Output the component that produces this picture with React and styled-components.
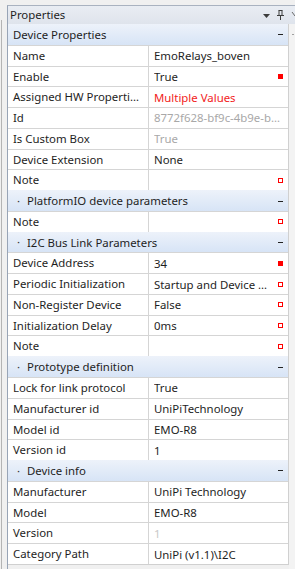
import styled, { createGlobalStyle } from "styled-components";

const GlobalStyle = createGlobalStyle`
  html, body {
    margin: 0;
    padding: 0;
    background: #f0f0f0;
    font-family: "Noto Sans", "Open Sans", sans-serif;
    font-size: 11.4px;
    color: #1e1e1e;
  }
`;

const sections = [
  {
    title: "Device Properties",
    bullet: false,
    rows: [
      { name: "Name", value: "EmoRelays_boven" },
      { name: "Enable", value: "True", mark: "filled" },
      { name: "Assigned HW Properties", value: "Multiple Values", tone: "red" },
      { name: "Id", value: "8772f628-bf9c-4b9e-b6a1-0c4e5d2f1a77", tone: "grey" },
      { name: "Is Custom Box", value: "True", tone: "grey" },
      { name: "Device Extension", value: "None" },
      { name: "Note", value: "", mark: "hollow" },
    ],
  },
  {
    title: "PlatformIO device parameters",
    bullet: true,
    rows: [{ name: "Note", value: "", mark: "hollow" }],
  },
  {
    title: "I2C Bus Link Parameters",
    bullet: true,
    rows: [
      { name: "Device Address", value: "34", mark: "filled" },
      { name: "Periodic Initialization", value: "Startup and Device Reset", mark: "hollow" },
      { name: "Non-Register Device", value: "False", mark: "hollow" },
      { name: "Initialization Delay", value: "0ms", mark: "hollow" },
      { name: "Note", value: "", mark: "hollow" },
    ],
  },
  {
    title: "Prototype definition",
    bullet: true,
    rows: [
      { name: "Lock for link protocol", value: "True" },
      { name: "Manufacturer id", value: "UniPiTechnology" },
      { name: "Model id", value: "EMO-R8" },
      { name: "Version id", value: "1" },
    ],
  },
  {
    title: "Device info",
    bullet: true,
    rows: [
      { name: "Manufacturer", value: "UniPi Technology" },
      { name: "Model", value: "EMO-R8" },
      { name: "Version", value: "1", tone: "light" },
      { name: "Category Path", value: "UniPi (v1.1)\\I2C" },
    ],
  },
];

const App = () => {
  return (
    <>
      <GlobalStyle />
      <Page>
        <Gutter />
        <Panel>
          <TitleBar>
            <Title>Properties</Title>
            <TitleIcons>
              <svg width="7" height="4" viewBox="0 0 7 4">
                <path d="M0 0 H7 L3.5 4 Z" fill="#3c3c3c" />
              </svg>
              <svg width="7" height="10" viewBox="0 0 7 10">
                <path d="M1.5 0.5 H5.5 M2 0.5 V5.5 M5 0.5 V5.5 M0 5.5 H7 M3.5 5.5 V10" stroke="#3c3c3c" strokeWidth="1" fill="none" />
              </svg>
              <svg width="4" height="8" viewBox="0 0 4 8">
                <path d="M1 1 L4 5" stroke="#6a6a6a" strokeWidth="1" fill="none" />
              </svg>
            </TitleIcons>
          </TitleBar>
          <Body>
            <Grid>
              {sections.map((s) => (
                <div key={s.title}>
                  <Header>
                    {s.bullet && <Bullet>·</Bullet>}
                    <HeaderText>{s.title}</HeaderText>
                    <Collapse />
                  </Header>
                  {s.rows.map((r, i) => (
                    <Row key={i}>
                      <NameCell>{r.name}</NameCell>
                      <ValueCell>
                        <Value $tone={r.tone}>{r.value}</Value>
                        {r.mark && <Marker $filled={r.mark === "filled"} />}
                      </ValueCell>
                    </Row>
                  ))}
                </div>
              ))}
            </Grid>
            <ScrollStrip>
              <Tick />
            </ScrollStrip>
          </Body>
        </Panel>
      </Page>
    </>
  );
};

const Page = styled.div`
  display: flex;
  height: 100vh;
  padding-top: 5px;
  box-sizing: border-box;
  overflow: hidden;
`;

const Gutter = styled.div`
  width: 6px;
  margin-left: 1px;
  margin-top: 15px;
  border-left: 1px solid #b4b4b4;
  box-sizing: border-box;
`;

const Panel = styled.section`
  flex: 1;
  display: flex;
  flex-direction: column;
  border-left: 1px solid #98a4b6;
  border-top: 1px solid #a9b2c0;
  min-width: 0;
`;

const TitleBar = styled.div`
  height: 18px;
  display: flex;
  align-items: center;
  justify-content: space-between;
  background: linear-gradient(#e9edf3, #dfe4ec);
  padding-left: 2px;
`;

const Title = styled.span`
  color: #1e1e1e;
  line-height: 18px;
`;

const TitleIcons = styled.div`
  display: flex;
  align-items: center;
  gap: 7px;
  svg:first-child {
    margin-top: 1px;
  }
`;

const Body = styled.div`
  flex: 1;
  display: flex;
  min-height: 0;
`;

const Grid = styled.div`
  width: 281px;
  border-right: 1px solid #d0d0d0;
  border-bottom: 1px solid #d0d0d0;
  box-sizing: border-box;
  background: #ffffff;
  align-self: flex-start;
`;

const ScrollStrip = styled.div`
  flex: 1;
  background: #f3f3f3;
  position: relative;
`;

const Tick = styled.div`
  position: absolute;
  top: 10px;
  right: 1px;
  width: 2px;
  height: 1px;
  background: #a0a0a0;
`;

const Header = styled.div`
  height: 20.77px;
  box-sizing: border-box;
  display: flex;
  align-items: center;
  background: linear-gradient(#edf2fa, #d7e4f6);
  padding-left: 5px;
  padding-right: 5px;
`;

const Bullet = styled.span`
  width: 14px;
  padding-left: 4px;
  box-sizing: border-box;
  line-height: 1;
  color: #333;
`;

const HeaderText = styled.span`
  flex: 1;
  white-space: nowrap;
  overflow: hidden;
`;

const Collapse = styled.span`
  width: 5px;
  height: 1px;
  background: #222;
  margin-top: 1px;
`;

const Row = styled.div`
  height: 20.77px;
  box-sizing: border-box;
  display: grid;
  grid-template-columns: 141px 1fr;
  border-top: 1px solid #d5d5d5;
`;

const NameCell = styled.div`
  border-right: 1px solid #d5d5d5;
  padding-left: 5px;
  padding-right: 8px;
  white-space: nowrap;
  overflow: hidden;
  text-overflow: ellipsis;
  line-height: 19px;
`;

const ValueCell = styled.div`
  display: flex;
  align-items: center;
  padding-left: 5px;
  padding-right: 5px;
  min-width: 0;
  gap: 6px;
`;

const toneColors = {
  red: "#f21c1c",
  grey: "#a8a8a8",
  light: "#c8c8c8",
};

const Value = styled.span`
  flex: 1;
  min-width: 0;
  white-space: nowrap;
  overflow: hidden;
  text-overflow: ellipsis;
  color: ${(p) => toneColors[p.$tone] || "#1e1e1e"};
  line-height: 19px;
`;

const Marker = styled.span`
  width: 5px;
  height: 5px;
  flex-shrink: 0;
  box-sizing: border-box;
  border: 1px solid #ff0000;
  background: ${(p) => (p.$filled ? "#ff0000" : "#ffffff")};
`;

export default App;
